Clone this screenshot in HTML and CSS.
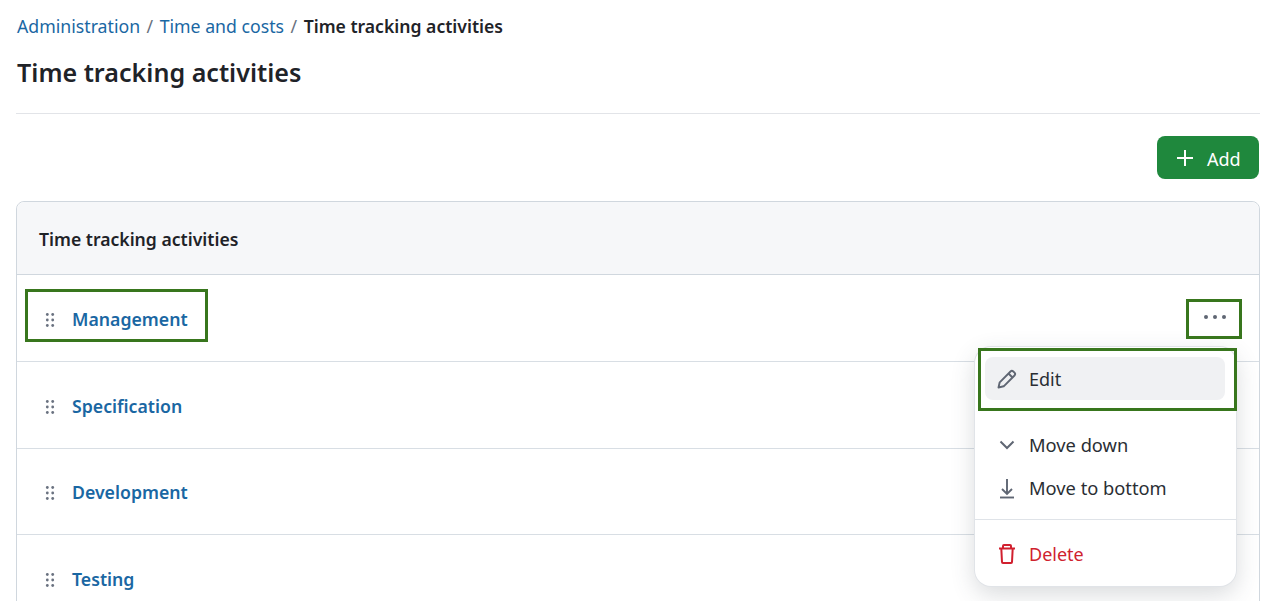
FILE: index.html
```html
<!DOCTYPE html>
<html lang="en">
<head>
    <meta charset="UTF-8">
    <meta name="viewport" content="width=device-width, initial-scale=1.0">
    <title>Time tracking activities</title>
    <link rel="stylesheet" href="styles.css">
</head>
<body>

<div class="page">
    <nav class="breadcrumb">
        <a href="#">Administration</a>
        <span class="sep">/</span>
        <a href="#">Time and costs</a>
        <span class="sep">/</span>
        <strong>Time tracking activities</strong>
    </nav>

    <h1 class="page-title">Time tracking activities</h1>

    <div class="toolbar">
        <button class="btn-add" type="button">
            <svg width="20" height="20" viewBox="0 0 20 20"><path d="M10 2v16M2 10h16" stroke="#fff" stroke-width="2" fill="none"/></svg>
            <span>Add</span>
        </button>
    </div>

    <div class="card">
        <div class="card-header"><span>Time tracking activities</span></div>
        <div class="row">
            <svg class="grip" width="10" height="16" viewBox="0 0 10 16"><g fill="#6a7280"><circle cx="2.300" cy="2.500" r="1.400"/><circle cx="7.700" cy="2.500" r="1.400"/><circle cx="2.300" cy="8" r="1.400"/><circle cx="7.700" cy="8" r="1.400"/><circle cx="2.300" cy="13.500" r="1.400"/><circle cx="7.700" cy="13.500" r="1.400"/></g></svg>
            <a href="#">Management</a>
            <button class="more" type="button"><span></span><span></span><span></span></button>
        </div>
        <div class="row">
            <svg class="grip" width="10" height="16" viewBox="0 0 10 16"><g fill="#6a7280"><circle cx="2.300" cy="2.500" r="1.400"/><circle cx="7.700" cy="2.500" r="1.400"/><circle cx="2.300" cy="8" r="1.400"/><circle cx="7.700" cy="8" r="1.400"/><circle cx="2.300" cy="13.500" r="1.400"/><circle cx="7.700" cy="13.500" r="1.400"/></g></svg>
            <a href="#">Specification</a>
        </div>
        <div class="row">
            <svg class="grip" width="10" height="16" viewBox="0 0 10 16"><g fill="#6a7280"><circle cx="2.300" cy="2.500" r="1.400"/><circle cx="7.700" cy="2.500" r="1.400"/><circle cx="2.300" cy="8" r="1.400"/><circle cx="7.700" cy="8" r="1.400"/><circle cx="2.300" cy="13.500" r="1.400"/><circle cx="7.700" cy="13.500" r="1.400"/></g></svg>
            <a href="#">Development</a>
        </div>
        <div class="row">
            <svg class="grip" width="10" height="16" viewBox="0 0 10 16"><g fill="#6a7280"><circle cx="2.300" cy="2.500" r="1.400"/><circle cx="7.700" cy="2.500" r="1.400"/><circle cx="2.300" cy="8" r="1.400"/><circle cx="7.700" cy="8" r="1.400"/><circle cx="2.300" cy="13.500" r="1.400"/><circle cx="7.700" cy="13.500" r="1.400"/></g></svg>
            <a href="#">Testing</a>
        </div>
    </div>
</div>

<div class="menu">
    <div class="menu-item active">
        <svg width="20" height="20" viewBox="0 0 20 20" fill="none" stroke="#5f6673" stroke-width="1.900" stroke-linejoin="round"><path d="M1.500 18.500l1.200-5.200L13.500 2.500a2 2 0 0 1 2.800 0l1.200 1.200a2 2 0 0 1 0 2.800L6.700 17.300z"/><path d="M11.500 4.500l4 4"/></svg>
        Edit
    </div>
    <div class="menu-item spaced">
        <svg width="20" height="20" viewBox="0 0 20 20" fill="none" stroke="#5f6673" stroke-width="2"><path d="M3.500 6.500L10 13l6.500-6.500"/></svg>
        Move down
    </div>
    <div class="menu-item">
        <svg width="20" height="20" viewBox="0 0 20 20" fill="none" stroke="#5f6673" stroke-width="1.900"><path d="M10 1v15M5 11l5 5 5-5"/><path d="M3 19.500h14"/></svg>
        Move to bottom
    </div>
    <div class="menu-divider"></div>
    <div class="menu-item danger">
        <svg width="20" height="20" viewBox="0 0 20 20" fill="none" stroke="#d1202f" stroke-width="2" stroke-linejoin="round"><path d="M2 4.500h16M6 4.500V2a1 1 0 0 1 1-1h6a1 1 0 0 1 1 1v2.500M4.300 4.500l.7 13.500a1 1 0 0 0 1 1h8a1 1 0 0 0 1-1l.7-13.500"/></svg>
        Delete
    </div>
</div>

<div class="mark mark-name"></div>
<div class="mark mark-more"></div>
<div class="mark mark-edit"></div>

</body>
</html>
```

FILE: styles.css
```css
html, body {
    height: 100%;
}

body {
    margin: 0;
    overflow: hidden;
    position: relative;
    background-color: #fff;
    color: #1f2328;
    font-family: "Noto Sans", sans-serif;
    font-size: 18px;
}

a {
    color: #1a67a3;
    text-decoration: none;
}

.page {
    padding: 12px 16px 0 16px;
}

/* Header */
.breadcrumb {
    display: flex;
    align-items: center;
    gap: 6.500px;
    height: 28px;
    padding-left: 1px;
    font-size: 17.700px;
}

.breadcrumb strong {
    font-weight: 600;
    font-size: 17.600px;
}

.breadcrumb .sep {
    color: #6a7280;
}

.page-title {
    margin: 0;
    padding: 12px 0 20px 1px;
    height: 41px;
    line-height: 41px;
    font-size: 25.100px;
    font-weight: 600;
    border-bottom: 1px solid #e2e4e8;
}

.toolbar {
    display: flex;
    justify-content: flex-end;
    padding: 22px 1px 22px 0;
}

.btn-add {
    display: flex;
    align-items: center;
    gap: 12px;
    width: 102px;
    height: 43px;
    padding: 0 0 0 18px;
    border: none;
    border-radius: 8px;
    background-color: #1f883d;
    color: #fff;
    font-family: inherit;
    font-size: 18px;
}

.btn-add span {
    padding-top: 2px;
}

/* Table card */
.card {
    border: 1px solid #d0d7de;
    border-radius: 8px 8px 0 0;
}

.card-header {
    display: flex;
    align-items: center;
    height: 73px;
    padding: 1px 0 0 22px;
    box-sizing: border-box;
    background-color: #f6f7f9;
    border-bottom: 1px solid #d0d7de;
    border-radius: 8px 8px 0 0;
    font-size: 17.600px;
    font-weight: 600;
}

.row {
    display: flex;
    align-items: center;
    gap: 17px;
    height: 86.800px;
    padding: 2px 18px 0 28px;
    box-sizing: border-box;
    border-bottom: 1px solid #d8dee4;
}

.row a {
    font-size: 17.700px;
    font-weight: 600;
}

.grip {
    margin-top: 2px;
}

.more {
    display: flex;
    gap: 5px;
    margin-left: auto;
    margin-top: -3px;
    padding: 0 15px 0 5px;
    border: none;
    background: none;
}

.more span {
    width: 4px;
    height: 4px;
    border-radius: 50%;
    background-color: #5f6673;
}

/* Action menu */
.menu {
    position: absolute;
    left: 975px;
    top: 347px;
    width: 261px;
    height: 239px;
    padding: 10px 0 0 0;
    box-sizing: border-box;
    background-color: #fff;
    border-radius: 16px;
    box-shadow: 0 0 0 1px #e1e4e8, 0 8px 24px rgba(60, 70, 80, 0.2);
}

.menu-item {
    display: flex;
    align-items: center;
    gap: 12px;
    height: 43px;
    margin: 0 11px 0 10px;
    padding: 0 0 0 12px;
    border-radius: 8px;
    color: #2a2e34;
    font-size: 18.300px;
}

.menu-item svg {
    overflow: visible;
}

.menu-item.active {
    background-color: #f0f1f3;
    font-size: 18px;
}

.menu-item.spaced {
    margin-top: 23px;
}

.menu-item.danger {
    color: #cf222e;
    font-size: 18px;
}

.menu-divider {
    height: 1px;
    margin: 10px 0 12px 0;
    background-color: #dfe3e8;
}

/* Green annotation frames */
.mark {
    position: absolute;
    box-sizing: border-box;
    border: 3px solid #38761d;
}

.mark-name {
    left: 25px;
    top: 289px;
    width: 183px;
    height: 53px;
}

.mark-more {
    left: 1186px;
    top: 299px;
    width: 56px;
    height: 40px;
}

.mark-edit {
    left: 978px;
    top: 348px;
    width: 259px;
    height: 63px;
}
```
